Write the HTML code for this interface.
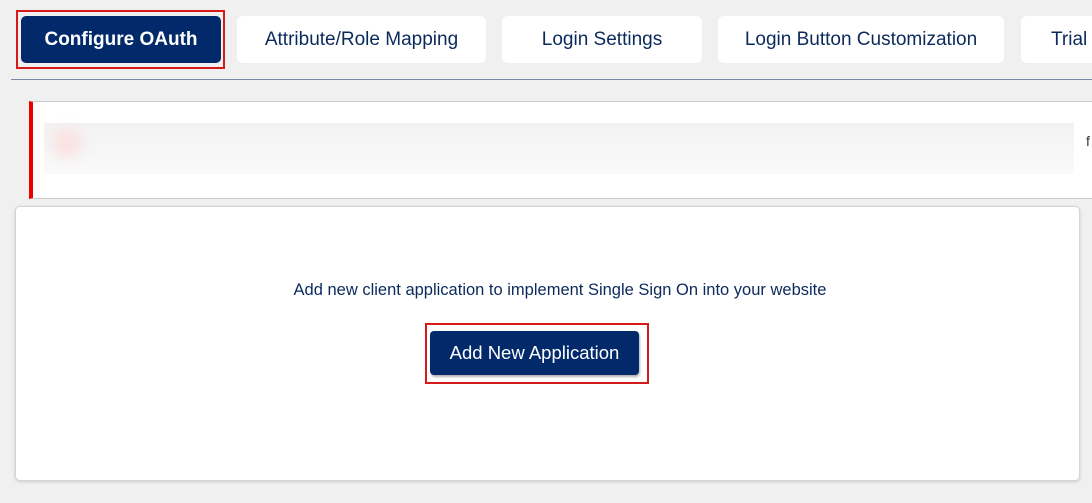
<!DOCTYPE html>
<html><head><style>
*{margin:0;padding:0;box-sizing:border-box}
body{width:1092px;height:503px;background:#f0f0f0;font-family:"Liberation Sans",sans-serif;position:relative;overflow:hidden;color:#0b2a5b}
.tab{position:absolute;top:16px;height:47px;background:#fff;border-radius:6px;font-size:19px;display:flex;align-items:center;justify-content:center;color:#0b2a5b}
.act{background:#022a6b;color:#fff;font-weight:bold;border-radius:5px}
</style></head><body>
<div style="position:absolute;left:16px;top:10px;width:209px;height:59px;border:2px solid #d51a1a"></div>
<div class="tab act" style="left:21px;top:16px;width:200px;">Configure OAuth</div>
<div class="tab" style="left:237px;width:249px;">Attribute/Role Mapping</div>
<div class="tab" style="left:502px;width:200px;">Login Settings</div>
<div class="tab" style="left:718px;width:286px;">Login Button Customization</div>
<div class="tab" style="left:1021px;width:90px;justify-content:flex-start;padding-left:30px">Trial</div>
<div style="position:absolute;left:11px;top:79px;width:1081px;height:1px;background:#7a8aa6"></div>
<div style="position:absolute;left:29px;top:101px;width:1063px;height:98px;background:#fff;border-top:1px solid #ccc;border-bottom:1px solid #ccc;border-left:4px solid #e00"></div>
<div style="position:absolute;left:44px;top:123px;width:1030px;height:51px;background:linear-gradient(#f2f2f2,#fafafa)"></div>
<div style="position:absolute;left:52px;top:128px;width:30px;height:30px;background:#fbe2e2;filter:blur(6px);border-radius:50%"></div>
<div style="position:absolute;left:1086px;top:133px;font-size:14px;color:#333">f</div>
<div style="position:absolute;left:15px;top:206px;width:1065px;height:275px;background:#fff;border:1px solid #d4d4d4;border-radius:5px;box-shadow:0 1px 3px rgba(0,0,0,.15)"></div>
<div style="position:absolute;left:15px;width:1090px;top:281px;text-align:center;font-size:16.5px;color:#0b2a5b">Add new client application to implement Single Sign On into your website</div>
<div style="position:absolute;left:425px;top:323px;width:224px;height:61px;border:2px solid #d51a1a"></div>
<div style="position:absolute;left:430px;top:331px;width:209px;height:44px;background:#022a6b;border-radius:4px;color:#fff;font-size:18.5px;display:flex;align-items:center;justify-content:center;box-shadow:1px 2px 2px rgba(0,0,0,.3)">Add New Application</div>
</body></html>
